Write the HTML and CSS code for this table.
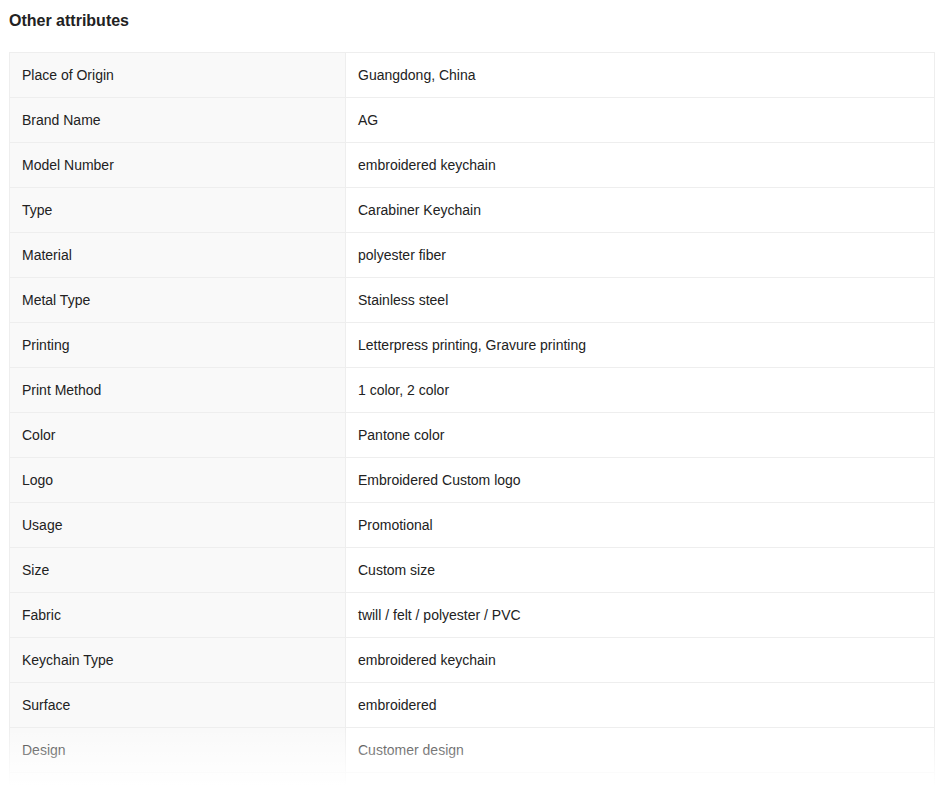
FILE: index.html
```html
<!DOCTYPE html>
<html>
<head>
<meta charset="utf-8">
<link rel="stylesheet" href="styles.css">
</head>
<body>
<div class="page">
  <h2 class="title">Other attributes</h2>
  <div class="attrs">
    <div class="row"><div class="key">Place of Origin</div><div class="val">Guangdong, China</div></div>
    <div class="row"><div class="key">Brand Name</div><div class="val">AG</div></div>
    <div class="row"><div class="key">Model Number</div><div class="val">embroidered keychain</div></div>
    <div class="row"><div class="key">Type</div><div class="val">Carabiner Keychain</div></div>
    <div class="row"><div class="key">Material</div><div class="val">polyester fiber</div></div>
    <div class="row"><div class="key">Metal Type</div><div class="val">Stainless steel</div></div>
    <div class="row"><div class="key">Printing</div><div class="val">Letterpress printing, Gravure printing</div></div>
    <div class="row"><div class="key">Print Method</div><div class="val">1 color, 2 color</div></div>
    <div class="row"><div class="key">Color</div><div class="val">Pantone color</div></div>
    <div class="row"><div class="key">Logo</div><div class="val">Embroidered Custom logo</div></div>
    <div class="row"><div class="key">Usage</div><div class="val">Promotional</div></div>
    <div class="row"><div class="key">Size</div><div class="val">Custom size</div></div>
    <div class="row"><div class="key">Fabric</div><div class="val">twill / felt / polyester / PVC</div></div>
    <div class="row"><div class="key">Keychain Type</div><div class="val">embroidered keychain</div></div>
    <div class="row"><div class="key">Surface</div><div class="val">embroidered</div></div>
    <div class="row"><div class="key">Design</div><div class="val">Customer design</div></div>
    <div class="row"><div class="key"></div><div class="val"></div></div>
  </div>
  <div class="fade"></div>
</div>
</body>
</html>
```
FILE: styles.css
```css
html, body {
  margin: 0;
  padding: 0;
  height: 786px;
  overflow: hidden;
  background: #fff;
}
.page {
  position: relative;
  height: 786px;
  overflow: hidden;
  padding: 0 9px;
  font-family: "Liberation Sans", Arial, sans-serif;
  color: #222;
}
.title {
  margin: 0;
  padding-top: 12px;
  height: 52px;
  box-sizing: border-box;
  font-size: 16px;
  font-weight: bold;
  line-height: 18px;
  color: #222;
}
.attrs {
  border: 1px solid #eeeeee;
  border-bottom: none;
}
.row {
  display: flex;
  height: 45px;
  border-bottom: 1px solid #eeeeee;
  box-sizing: border-box;
  font-size: 14px;
}
.key {
  width: 336px;
  box-sizing: border-box;
  flex: none;
  background: #f9f9f9;
  border-right: 1px solid #eeeeee;
  padding-left: 12px;
  display: flex;
  align-items: center;
  color: #222;
}
.val {
  flex: 1;
  padding-left: 12px;
  display: flex;
  align-items: center;
  color: #222;
}
.fade {
  position: absolute;
  left: 0;
  right: 0;
  top: 728px;
  height: 58px;
  background: linear-gradient(rgba(255,255,255,0), #fff);
}
```
